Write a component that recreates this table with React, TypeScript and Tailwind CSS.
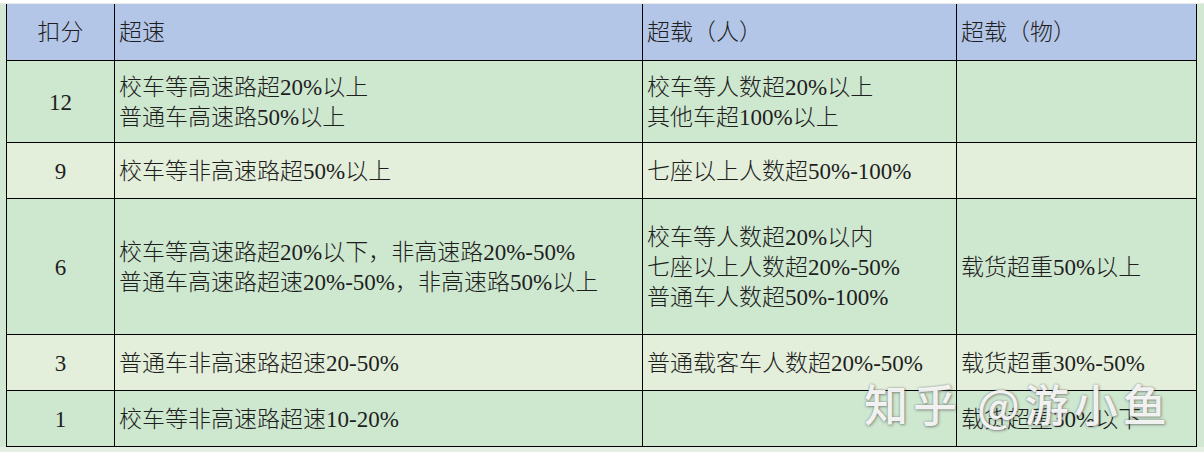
const rows = [
  { score: '12', speed: ['校车等高速路超20%以上', '普通车高速路50%以上'], people: ['校车等人数超20%以上', '其他车超100%以上'], goods: [], dark: true },
  { score: '9', speed: ['校车等非高速路超50%以上'], people: ['七座以上人数超50%-100%'], goods: [], dark: false },
  {
    score: '6',
    speed: ['校车等高速路超20%以下，非高速路20%-50%', '普通车高速路超速20%-50%，非高速路50%以上'],
    people: ['校车等人数超20%以内', '七座以上人数超20%-50%', '普通车人数超50%-100%'],
    goods: ['载货超重50%以上'],
    dark: true,
  },
  { score: '3', speed: ['普通车非高速路超速20-50%'], people: ['普通载客车人数超20%-50%'], goods: ['载货超重30%-50%'], dark: false },
  { score: '1', speed: ['校车等非高速路超速10-20%'], people: [], goods: ['载货超重30%以下'], dark: true },
];

const heights = ['h-[81px]', 'h-[55px]', 'h-[135px]', 'h-[55px]', 'h-[55px]'];

function Lines({ lines }: { lines: string[] }) {
  return (
    <div className="flex flex-col">
      {lines.map((l, i) => (
        <span key={i} className="whitespace-nowrap">
          {l}
        </span>
      ))}
    </div>
  );
}

export default function App() {
  return (
    <div
      className="relative h-[452px] w-[1204px] overflow-hidden bg-[#d2e8d2] text-[23px] font-light leading-[30px] text-[#1e1e1e]"
      style={{ fontFamily: '"Liberation Serif", "Noto Sans CJK SC", serif' }}
    >
      <div className="h-[4px] border-b border-[#e6ebe6] bg-white" />
      <div className="ml-[6px] grid w-[1191px] grid-cols-[107px_527px_313px_239px] gap-px bg-black px-px pb-px">
        <div className="flex h-[56px] items-center justify-center bg-[#b4c6e7] pt-[2px]">扣分</div>
        <div className="flex h-[56px] items-center bg-[#b4c6e7] pl-[4px] pt-[2px]">超速</div>
        <div className="flex h-[56px] items-center bg-[#b4c6e7] pl-[4px] pt-[2px]">超载（人）</div>
        <div className="flex h-[56px] items-center bg-[#b4c6e7] pl-[4px] pt-[2px]">超载（物）</div>
        {rows.map((r, i) => {
          const bg = r.dark ? 'bg-[#cee7cf]' : 'bg-[#e3eedb]';
          return [
            <div key={`a${i}`} className={`flex items-center justify-center pt-[3px] ${heights[i]} ${bg}`}>
              {r.score}
            </div>,
            <div key={`b${i}`} className={`flex items-center pl-[4px] pt-[3px] ${heights[i]} ${bg}`}>
              <Lines lines={r.speed} />
            </div>,
            <div key={`c${i}`} className={`flex items-center pl-[4px] pt-[3px] ${heights[i]} ${bg}`}>
              <Lines lines={r.people} />
            </div>,
            <div key={`d${i}`} className={`flex items-center pl-[4px] pt-[3px] ${heights[i]} ${bg}`}>
              <Lines lines={r.goods} />
            </div>,
          ];
        })}
      </div>
      <div className="h-[6px] bg-[#e4eee2]" />
      {/* watermark over the table */}
      <div
        className="absolute left-[864px] top-[381px] whitespace-nowrap text-[44px] font-medium leading-[44px] tracking-[5px] text-white/90 [text-shadow:0_0_2px_rgba(70,70,70,0.6),1px_1px_3px_rgba(70,70,70,0.45)]"
        style={{ fontFamily: '"Noto Sans CJK SC", sans-serif' }}
      >
        知乎 @游小鱼
      </div>
    </div>
  );
}
